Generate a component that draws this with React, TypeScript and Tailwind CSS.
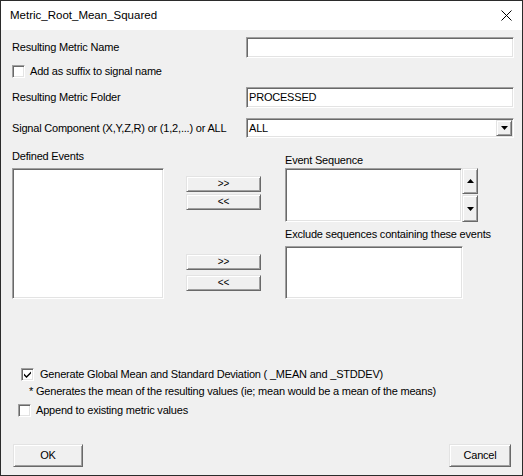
import React from 'react';

// classic win32 3D edges
const sunken =
  'border border-t-[#a0a0a0] border-l-[#a0a0a0] border-b-white border-r-white shadow-[inset_1px_1px_0_#696969,inset_-1px_-1px_0_#e3e3e3] bg-white';
const raised =
  'border border-t-[#e3e3e3] border-l-[#e3e3e3] border-b-[#696969] border-r-[#696969] shadow-[inset_1px_1px_0_#ffffff,inset_-1px_-1px_0_#a0a0a0] bg-[#f0f0f0]';

function Checkbox({ checked = false }: { checked?: boolean }) {
  return (
    <div className={`w-[13px] h-[13px] shrink-0 flex items-center justify-center ${sunken}`}>
      {checked && (
        <svg width="9" height="9" viewBox="0 0 9 9">
          <path d="M1 3.5 L3.5 6 L8 1.5 L8 3.5 L3.5 8 L1 5.5 Z" fill="#000" />
        </svg>
      )}
    </div>
  );
}

function Arrow({ up = false }: { up?: boolean }) {
  return (
    <svg width="7" height="4" viewBox="0 0 7 4">
      <path d={up ? 'M3.5 0 L7 4 L0 4 Z' : 'M0 0 L7 0 L3.5 4 Z'} fill="#000" />
    </svg>
  );
}

function MoveButton({ label }: { label: string }) {
  return (
    <div className={`h-[16px] w-[75px] flex items-center justify-center leading-none text-[10px] ${raised}`}>
      {label}
    </div>
  );
}

export default function App() {
  return (
    <div className="w-[523px] h-[476px] border border-[#2b2b2b] bg-[#f0f0f0] flex flex-col font-['Liberation_Sans',Arial,sans-serif] text-[11px] tracking-[-0.2px] text-black overflow-hidden">
      {/* Title bar */}
      <div className="h-[29px] bg-white flex items-center justify-between pl-[9px] pr-[10px] shrink-0">
        <span className="text-[11.5px] tracking-normal">Metric_Root_Mean_Squared</span>
        <svg width="11" height="11" viewBox="0 0 11 11">
          <path d="M0.5 0.5 L10.5 10.5 M10.5 0.5 L0.5 10.5" stroke="#000" strokeWidth="1" />
        </svg>
      </div>

      <div className="flex flex-col pl-[11px] pr-[8px]">
        {/* Metric name */}
        <div className="mt-[7px] flex items-center justify-between">
          <span>Resulting Metric Name</span>
          <div className={`w-[268px] h-[21px] ${sunken}`} />
        </div>

        <div className="mt-[7px] flex items-center gap-[5px] leading-[13px]">
          <Checkbox />
          <span>Add as suffix to signal name</span>
        </div>

        {/* Folder */}
        <div className="mt-[9px] flex items-center justify-between">
          <span>Resulting Metric Folder</span>
          <div className={`w-[268px] h-[21px] flex items-center pl-[2px] ${sunken}`}>PROCESSED</div>
        </div>

        {/* Signal component */}
        <div className="mt-[10px] flex items-center justify-between">
          <span>Signal Component (X,Y,Z,R) or (1,2,...) or ALL</span>
          <div className={`w-[268px] h-[20px] flex p-px ${sunken}`}>
            <div className="flex-1 flex items-center pl-px">ALL</div>
            <div className={`w-[16px] flex items-center justify-center ${raised}`}>
              <Arrow />
            </div>
          </div>
        </div>

        {/* Events */}
        <div className="mt-[12px] flex">
          <div className="w-[152px] flex flex-col">
            <div className="leading-[13px]">Defined Events</div>
            <div className={`mt-[5px] h-[131px] ${sunken}`} />
          </div>

          <div className="ml-[22px] flex flex-col">
            <div className="mt-[26px]">
              <MoveButton label=">>" />
            </div>
            <div className="mt-[2px]">
              <MoveButton label="<<" />
            </div>
            <div className="mt-[44px]">
              <MoveButton label=">>" />
            </div>
            <div className="mt-[5px]">
              <MoveButton label="<<" />
            </div>
          </div>

          <div className="ml-[24px] flex flex-col">
            <div className="mt-[4px] leading-[13px]">Event Sequence</div>
            <div className="mt-[1px] flex">
              <div className={`w-[177px] h-[54px] ${sunken}`} />
              <div className="w-[16px] flex flex-col">
                <div className={`h-[26px] flex items-center justify-center ${raised}`}>
                  <Arrow up />
                </div>
                <div className={`mt-[1px] h-[27px] flex items-center justify-center ${raised}`}>
                  <Arrow />
                </div>
              </div>
            </div>
            <div className="mt-[6px] leading-[13px]">Exclude sequences containing these events</div>
            <div className={`mt-[5px] w-[178px] h-[53px] ${sunken}`} />
          </div>
        </div>

        {/* Options */}
        <div className="mt-[69px] ml-[9px] flex items-center gap-[6px] leading-[13px]">
          <Checkbox checked />
          <span>Generate Global Mean and Standard Deviation ( _MEAN and _STDDEV)</span>
        </div>
        <div className="mt-[4px] ml-[17px] leading-[13px]">
          * Generates the mean of the resulting values (ie; mean would be a mean of the means)
        </div>
        <div className="mt-[6px] ml-[6px] flex items-center gap-[5px] leading-[13px]">
          <Checkbox />
          <span>Append to existing metric values</span>
        </div>

        {/* Dialog buttons */}
        <div className="mt-[27px] flex justify-between pl-px pr-[3px]">
          <div className={`w-[70px] h-[23px] flex items-center justify-center ${raised}`}>OK</div>
          <div className={`w-[62px] h-[23px] flex items-center justify-center ${raised}`}>Cancel</div>
        </div>
      </div>
    </div>
  );
}
